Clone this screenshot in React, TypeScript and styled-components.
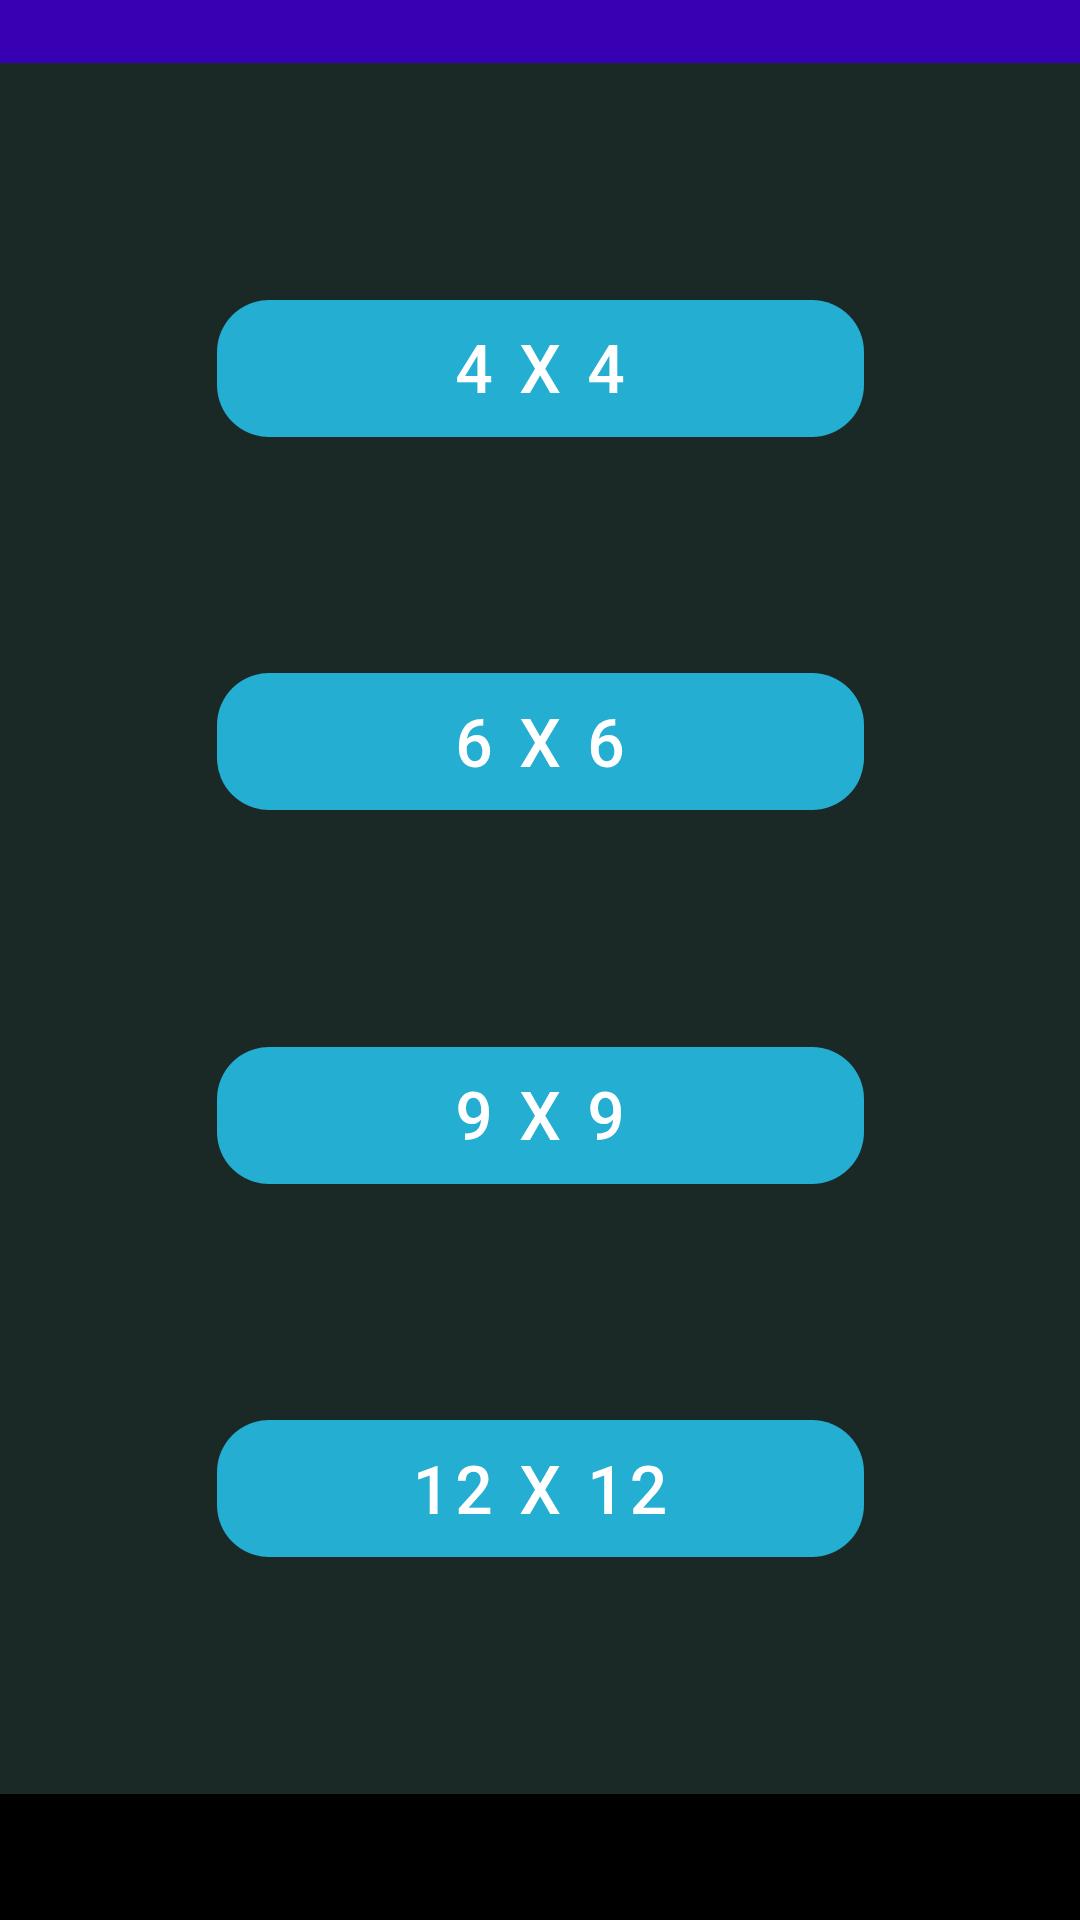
import React from "react";
import styled, { createGlobalStyle } from "styled-components";

const Global = createGlobalStyle`
  html, body { margin: 0; padding: 0; background: #000; }
  #root { width: 1080px; height: 1920px; }
`;

const Screen = styled.div`
  width: 1080px;
  height: 1920px;
  display: flex;
  flex-direction: column;
  font-family: Roboto, "Noto Sans", sans-serif;
`;

const StatusBar = styled.div`
  height: 63px;
  flex: none;
  background: #3700b3;
`;

const Content = styled.main`
  flex: 1;
  background: #1a2826;
  display: flex;
  flex-direction: column;
  align-items: center;
  justify-content: space-evenly;
`;

const NavBar = styled.div`
  height: 126px;
  flex: none;
  background: #000;
`;

const SizeButton = styled.button`
  width: 647px;
  height: 137px;
  border: none;
  border-radius: 52px;
  background: #23aed2;
  color: #fff;
  font-family: Roboto, "Noto Sans", sans-serif;
  font-weight: 500;
  font-size: 66px;
  line-height: 1.172;
  letter-spacing: 5px;
  padding: 5px 0 0 5px;
  display: flex;
  align-items: center;
  justify-content: center;
  cursor: pointer;
`;

const sizes = [4, 6, 9, 12];

export default function App() {
  return (
    <Screen>
      <Global />
      <StatusBar />
      <Content>
        {sizes.map((n) => (
          <SizeButton key={n}>{`${n} X ${n}`}</SizeButton>
        ))}
      </Content>
      <NavBar />
    </Screen>
  );
}
